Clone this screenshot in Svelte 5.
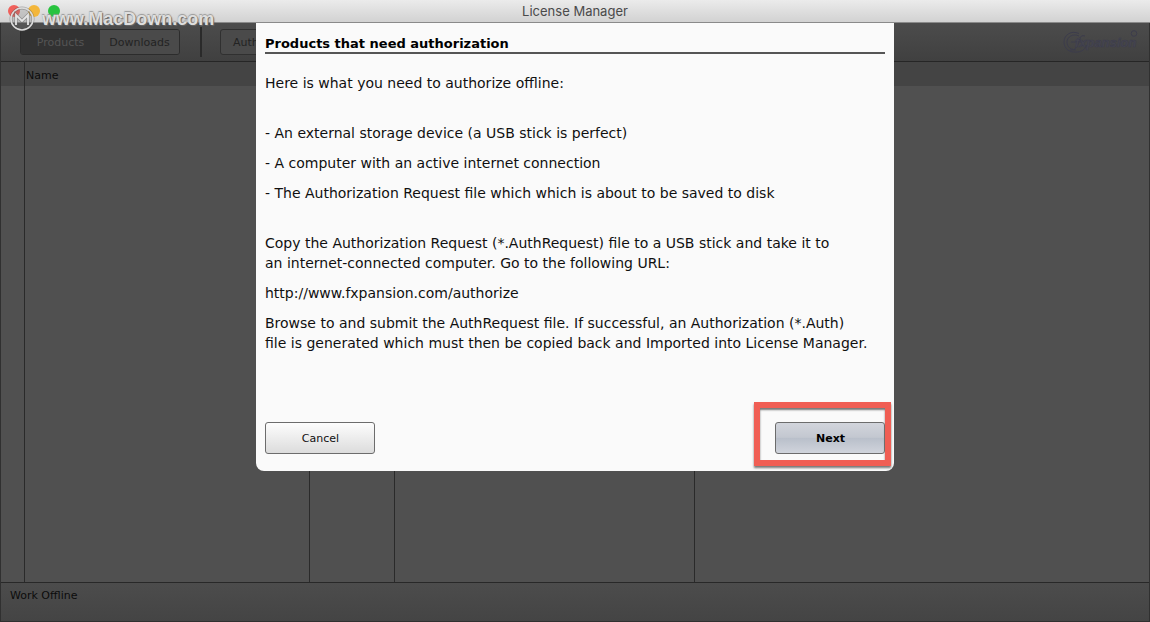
<script>
  const columns = ['', 'Name', '', '', ''];
  let tab = $state('Products');
</script>

<div class="window">
  <header class="titlebar">
    <div class="lights">
      <button class="light red" aria-label="Close"></button>
      <button class="light amber" aria-label="Minimize"></button>
      <button class="light green" aria-label="Zoom"></button>
    </div>
    <h1>License Manager</h1>
  </header>

  <div class="watermark">
    <svg width="26" height="26" viewBox="0 0 26 26" aria-hidden="true">
      <circle cx="13" cy="13" r="11" fill="#777" fill-opacity=".25" stroke="#444" stroke-opacity=".35" stroke-width="3" />
      <circle cx="13" cy="13" r="11" fill="none" stroke="#dcdcdc" stroke-width="1.6" />
      <path d="M7 19V9l6 6 6-6v10" fill="none" stroke="#666" stroke-opacity=".5" stroke-width="3.4" />
      <path d="M7 19V9l6 6 6-6v10" fill="none" stroke="#e6e6e6" stroke-width="1.8" />
    </svg>
    <span>www.MacDown.com</span>
  </div>

  <nav class="toolbar">
    <div class="tabs">
      {#each ['Products', 'Downloads'] as name}
        <button class:active={tab === name} onclick={() => (tab = name)}>{name}</button>
      {/each}
    </div>
    <div class="divider"></div>
    <button class="authorize">Auth</button>
    <svg class="brand" width="80" height="26" viewBox="0 0 80 26" aria-label="fxpansion" role="img">
      <g fill="none" stroke="#3c3c4c" stroke-width="1">
        <path d="M17 4.500C9 1 2 6 2 13s6 11 13 10c5 0 8-3 10-7" />
        <path d="M17 7C11 4 5 8 5 13s4 8 9 8" />
        <path d="M8 21c5 1 8-4 9-9s3-6 6-5M9 13h12" />
        <circle cx="72" cy="4.500" r="2.800" />
      </g>
      <text x="13" y="18">fxpansion</text>
    </svg>
  </nav>

  <main>
    <table>
      <colgroup>
        <col class="c-mark" /><col class="c-name" /><col class="c-short" /><col class="c-mid" /><col />
      </colgroup>
      <thead>
        <tr>{#each columns as c}<th>{c}</th>{/each}</tr>
      </thead>
      <tbody>
        <tr>{#each columns as _}<td></td>{/each}</tr>
      </tbody>
    </table>
  </main>

  <footer>Work Offline</footer>

  <div class="dialog" role="dialog" aria-labelledby="dialog-title">
    <h2 id="dialog-title">Products that need authorization</h2>
    <div class="copy">
      <p>Here is what you need to authorize offline:</p>
      <ul>
        <li>- An external storage device (a USB stick is perfect)</li>
        <li>- A computer with an active internet connection</li>
        <li>- The Authorization Request file which which is about to be saved to disk</li>
      </ul>
      <p>Copy the Authorization Request (*.AuthRequest) file to a USB stick and take it to<br />an internet-connected computer. Go to the following URL:</p>
      <p>http://www.fxpansion.com/authorize</p>
      <p>Browse to and submit the AuthRequest file. If successful, an Authorization (*.Auth)<br />file is generated which must then be copied back and Imported into License Manager.</p>
    </div>
    <div class="actions">
      <button class="action">Cancel</button>
      <div class="highlight"><button class="action primary">Next</button></div>
    </div>
  </div>
</div>

<style>
  :global(body) {
    margin: 0;
    background: #505050;
  }
  .window {
    position: relative;
    display: flex;
    flex-direction: column;
    height: 100vh;
    box-sizing: border-box;
    overflow: hidden;
    font-family: "DejaVu Sans", Verdana, sans-serif;
    font-size: 11px;
    color: #0c0c0c;
    background: #505050;
  }
  .window::after {
    content: "";
    position: absolute;
    inset: 23px 0 0;
    border: 1px solid #303030;
    border-top: 0;
    pointer-events: none;
  }
  button {
    font: inherit;
    color: inherit;
    padding: 0;
    box-sizing: border-box;
  }
  .titlebar {
    display: grid;
    grid-template-columns: 1fr auto 1fr;
    align-items: center;
    flex: none;
    height: 23px;
    box-sizing: border-box;
    border-bottom: 1px solid #8a8a8a;
    background: linear-gradient(#ebebeb, #d2d2d2);
  }
  .lights {
    display: flex;
    gap: 8px;
    padding-left: 8px;
  }
  .light {
    width: 12px;
    height: 12px;
    border: 0;
    border-radius: 50%;
  }
  .red { background: #f0605b; }
  .amber { background: #f3b63a; }
  .green { background: #28c33f; }
  h1 {
    margin: 0;
    padding-top: 1px;
    font: 13px/21px Inter, "Liberation Sans", sans-serif;
    color: #4a4a4a;
  }
  .watermark {
    position: absolute;
    z-index: 3;
    top: 6px;
    left: 9px;
    display: flex;
    align-items: center;
    gap: 7px;
    font: bold 18px/26px "Liberation Sans", Arial, sans-serif;
    color: #dedede;
    text-shadow: 1px 1px 1px #666, 0 -1px 1px #999;
    pointer-events: none;
  }
  .toolbar {
    display: flex;
    align-items: center;
    flex: none;
    height: 39px;
    box-sizing: border-box;
    padding: 0 8px 0 20px;
    border-bottom: 1px solid #262626;
    background: linear-gradient(#4c4c4c, #404040);
    color: #232323;
  }
  .tabs {
    display: flex;
    border: 1px solid #2c2c2c;
    border-radius: 3px;
    overflow: hidden;
  }
  .tabs button {
    width: 79px;
    height: 24px;
    border: 0;
    background: #4a4a4a;
  }
  .tabs button.active {
    background: #323232;
    color: #555;
  }
  .divider {
    width: 2px;
    height: 30px;
    margin: 0 18px 0 20px;
    background: #2a2a2a;
  }
  .authorize {
    width: 80px;
    height: 26px;
    padding-left: 12px;
    border: 1px solid #303030;
    border-radius: 3px;
    background: #4a4a4a;
    text-align: left;
  }
  .brand {
    margin-left: auto;
  }
  .brand text {
    font: italic bold 13px "Liberation Sans", sans-serif;
    fill: #47474f;
    stroke: #3c3c4c;
    stroke-width: .6;
  }
  main {
    flex: 1;
    min-height: 0;
  }
  table {
    width: 100%;
    height: 100%;
    table-layout: fixed;
    border-collapse: separate;
    border-spacing: 0;
  }
  .c-mark { width: 25px; }
  .c-name { width: 285px; }
  .c-short { width: 85px; }
  .c-mid { width: 300px; }
  th, td {
    padding: 0 1px;
    box-sizing: border-box;
  }
  th {
    height: 24px;
    padding-top: 2px;
    text-align: left;
    font-weight: normal;
    background: #444;
  }
  th:first-child,
  td:not(:last-child) {
    border-right: 1px solid #2a2a2a;
  }
  footer {
    flex: none;
    height: 40px;
    box-sizing: border-box;
    padding: 5px 10px;
    border-top: 1px solid #282828;
    line-height: 16px;
    background: linear-gradient(#4c4c4c, #444);
  }
  .dialog {
    position: absolute;
    z-index: 2;
    top: 23px;
    left: 50%;
    transform: translateX(-50%);
    width: 638px;
    box-sizing: border-box;
    padding: 12px 9px 17px;
    border-radius: 0 0 8px 8px;
    background: #fafafa;
    color: #101010;
  }
  h2 {
    margin: 0 0 19px;
    border-bottom: 2px solid #555;
    font-size: 13px;
    line-height: 17px;
    color: #000;
  }
  .copy {
    font-size: 14px;
    line-height: 20px;
    white-space: nowrap;
  }
  .copy p {
    margin: 0 0 10px;
  }
  ul {
    display: grid;
    gap: 10px;
    margin: 30px 0;
    padding: 0;
    list-style: none;
  }
  .actions {
    display: flex;
    justify-content: space-between;
    align-items: center;
    margin-top: 69px;
  }
  .action {
    width: 110px;
    height: 32px;
    padding: 1px 0 0 1px;
    border: 1px solid #6c6c6c;
    border-radius: 3px;
    background: linear-gradient(#fdfdfd, #dcdcdc);
  }
  .primary {
    font-weight: bold;
    color: #000;
    background: linear-gradient(#d2d5dc, #c3c7d0 48%, #b9bfca 50%, #d0d4dc);
  }
  .highlight {
    position: relative;
  }
  .highlight::after {
    content: "";
    position: absolute;
    inset: -20px -6px -12px -21px;
    border: 6px solid #f05e54;
    box-shadow: 0 2px 2px #777, inset 0 2px 2px #777;
    pointer-events: none;
  }
</style>
